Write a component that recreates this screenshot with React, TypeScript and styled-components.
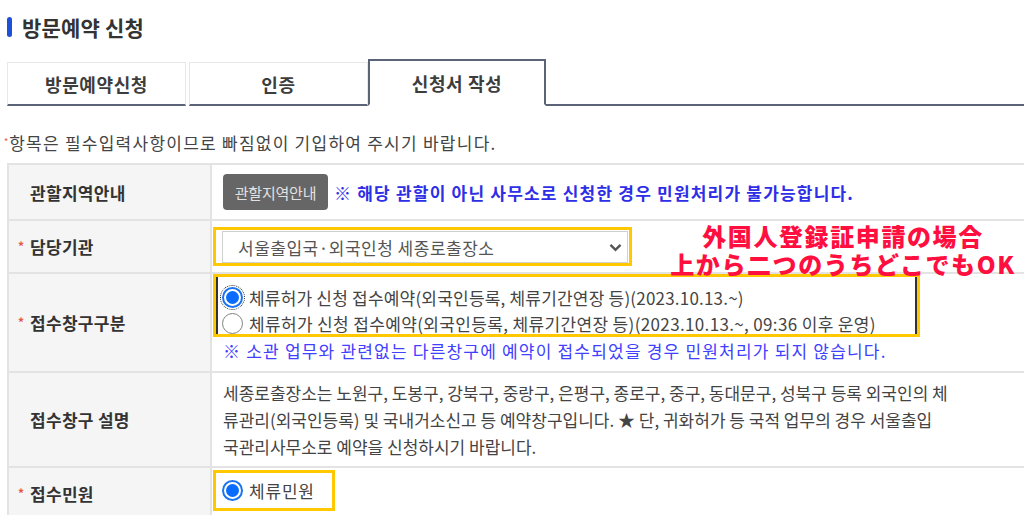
import React from "react";
import styled, { createGlobalStyle } from "styled-components";

const Global = createGlobalStyle`
  html, body { margin: 0; padding: 0; background: #fff; }
  body {
    width: 1024px; height: 515px; overflow: hidden;
    font-family: "Noto Sans CJK KR", "Noto Sans", sans-serif;
    color: #444;
  }
`;

const Page = styled.div`
  padding-left: 4px;
  width: 1100px;
`;

const TitleRow = styled.div`
  display: flex;
  align-items: center;
  gap: 10px;
  height: 28px;
  margin-top: 13px;
  padding-left: 3px;
`;

const TitleBar = styled.span`
  width: 5px;
  height: 20px;
  border-radius: 3px;
  background: #1d4fd8;
`;

const Title = styled.h1`
  margin: 0;
  font-size: 21px;
  font-weight: 700;
  color: #333;
  letter-spacing: 0.2px;
`;

const TabBar = styled.div`
  display: flex;
  align-items: flex-end;
  margin-top: 18px;
  margin-left: 3px;
`;

const Tab = styled.div<{ $active?: boolean; $w: number; $gap?: number }>`
  box-sizing: border-box;
  width: ${(p) => p.$w}px;
  margin-right: ${(p) => p.$gap ?? 0}px;
  display: flex;
  align-items: center;
  justify-content: center;
  font-size: 18px;
  font-weight: 700;
  letter-spacing: 0.6px;
  color: #3d3d3d;
  background: #fff;
  height: ${(p) => (p.$active ? 47 : 44)}px;
  border: ${(p) => (p.$active ? "2px solid #5a6378" : "1px solid #e8e8e8")};
  border-bottom: ${(p) => (p.$active ? "2px solid transparent" : "2px solid #5a6378")};
  padding-top: ${(p) => (p.$active ? 0 : 1)}px;
`;

const TabFill = styled.div`
  flex: 1;
  border-bottom: 2px solid #5a6378;
`;

const Note = styled.p`
  margin: 25px 0 0;
  font-size: 17px;
  line-height: 24px;
  letter-spacing: 1.25px;
  color: #444;
  display: flex;
  align-items: flex-start;
`;

const Star = styled.span<{ $size?: number }>`
  color: #e8543f;
  font-size: ${(p) => p.$size ?? 11}px;
  line-height: 1;
  margin-top: 6px;
  margin-right: 1px;
  letter-spacing: 0;
`;

const Table = styled.div`
  position: relative;
  margin-top: 8px;
  margin-left: 3px;
  display: grid;
  grid-template-columns: 203px 1fr;
  border-top: 2px solid #e3e3e3;
  border-left: 2px solid #e3e3e3;
`;

const LabelCell = styled.div<{ $h: number }>`
  box-sizing: border-box;
  min-height: ${(p) => p.$h}px;
  background: #f5f5f5;
  border-right: 2px solid #e3e3e3;
  border-bottom: 2px solid #e3e3e3;
  display: flex;
  align-items: center;
  padding-left: 9px;
  font-size: 17px;
  font-weight: 700;
  letter-spacing: 0.3px;
  color: #333;
`;

const LabelStar = styled.span`
  color: #e8543f;
  font-size: 12px;
  width: 12px;
  margin-top: -2px;
`;

const LabelText = styled.span<{ $plain?: boolean }>`
  padding-left: ${(p) => (p.$plain ? 12 : 0)}px;
`;

const ContentCell = styled.div<{ $h: number; $align?: string; $pt?: number }>`
  box-sizing: border-box;
  min-height: ${(p) => p.$h}px;
  border-bottom: 2px solid #e3e3e3;
  display: flex;
  flex-direction: column;
  justify-content: ${(p) => p.$align ?? "center"};
  padding-top: ${(p) => p.$pt ?? 0}px;
  padding-left: 1px;
`;

const InlineRow = styled.div`
  display: flex;
  align-items: center;
  padding-left: 10px;
  gap: 6px;
`;

const GuideButton = styled.button`
  width: 105px;
  height: 36px;
  border: none;
  border-radius: 4px;
  background: #666;
  color: #e2e2e2;
  font-family: inherit;
  font-size: 15px;
  padding: 0;
  letter-spacing: -0.2px;
`;

const BlueBold = styled.span`
  color: #2e2ee6;
  font-size: 17px;
  font-weight: 700;
  letter-spacing: 1.2px;
  white-space: nowrap;
`;

const Highlight = styled.div<{ $w: number; $pad?: string }>`
  box-sizing: border-box;
  width: ${(p) => p.$w}px;
  border: 3px solid #ffc800;
  padding: ${(p) => p.$pad ?? "0"};
`;

const SelectBox = styled.div`
  box-sizing: border-box;
  height: 32px;
  border: 1px solid #d0d0d0;
  display: flex;
  align-items: center;
  justify-content: space-between;
  padding: 0 5px 0 15px;
  font-size: 17px;
  letter-spacing: 0.5px;
  color: #555;
  background: #fff;
`;

const RadioGroup = styled.div`
  border-left: 2px solid #333;
  border-right: 2px solid #333;
  padding: 10px 0 0 4px;
  height: 57px;
  box-sizing: border-box;
  display: flex;
  flex-direction: column;
  gap: 5px;
`;

const RadioLine = styled.label<{ $ls?: number }>`
  display: flex;
  align-items: center;
  gap: 6px;
  font-size: 17px;
  line-height: 21px;
  letter-spacing: ${(p) => p.$ls ?? 0}px;
  color: #444;
  white-space: nowrap;
`;

const Radio = styled.span<{ $checked?: boolean; $focus?: boolean }>`
  box-sizing: border-box;
  width: 21px;
  height: 21px;
  flex: none;
  border-radius: 50%;
  background: #fff;
  border: ${(p) => (p.$checked ? "2px solid #1a73f0" : "1.5px solid #808080")};
  display: flex;
  align-items: center;
  justify-content: center;
  outline: ${(p) => (p.$focus ? "1px dotted #222" : "none")};
  outline-offset: 1px;
  &::after {
    content: "";
    display: ${(p) => (p.$checked ? "block" : "none")};
    width: 13px;
    height: 13px;
    border-radius: 50%;
    background: #0a6cff;
  }
`;

const BlueNote = styled.div`
  margin-top: 2px;
  padding-left: 10px;
  font-size: 17px;
  line-height: 24px;
  letter-spacing: 1.2px;
  color: #4040ff;
  white-space: nowrap;
`;

const Desc = styled.div`
  padding-left: 10px;
  font-size: 17px;
  line-height: 27px;
  color: #444;
`;

const DescLine = styled.span`
  display: block;
  white-space: nowrap;
`;

const Annotation = styled.div`
  position: absolute;
  left: 644px;
  top: 57px;
  width: 380px;
  text-align: center;
  font-family: "Noto Sans CJK JP", sans-serif;
  font-weight: 900;
  font-size: 24px;
  line-height: 28px;
  color: #ff0f40;
  letter-spacing: 1.6px;
`;

const Chevron = () => (
  <svg width="13" height="9" viewBox="0 0 13 9">
    <path d="M1.5 1.8 L6.5 6.8 L11.5 1.8" fill="none" stroke="#555" strokeWidth="2.4" />
  </svg>
);

export default function App() {
  return (
    <>
      <Global />
      <Page>
        <TitleRow>
          <TitleBar />
          <Title>방문예약 신청</Title>
        </TitleRow>
        <TabBar>
          <Tab $w={179} $gap={3}>방문예약신청</Tab>
          <Tab $w={179}>인증</Tab>
          <Tab $w={178} $active>신청서 작성</Tab>
          <TabFill />
        </TabBar>
        <Note>
          <Star $size={9}>*</Star>항목은 필수입력사항이므로 빠짐없이 기입하여 주시기 바랍니다.
        </Note>
        <Table>
          <LabelCell $h={56}>
            <LabelText $plain>관할지역안내</LabelText>
          </LabelCell>
          <ContentCell $h={56}>
            <InlineRow>
              <GuideButton>관할지역안내</GuideButton>
              <BlueBold>※ 해당 관할이 아닌 사무소로 신청한 경우 민원처리가 불가능합니다.</BlueBold>
            </InlineRow>
          </ContentCell>

          <LabelCell $h={53}>
            <LabelStar>*</LabelStar>
            <LabelText>담당기관</LabelText>
          </LabelCell>
          <ContentCell $h={53}>
            <Highlight $w={419} $pad="1px 1px 0 6px">
              <SelectBox>
                <span>서울출입국·외국인청 세종로출장소</span>
                <Chevron />
              </SelectBox>
            </Highlight>
          </ContentCell>

          <LabelCell $h={99}>
            <LabelStar>*</LabelStar>
            <LabelText>접수창구구분</LabelText>
          </LabelCell>
          <ContentCell $h={99} $align="flex-start">
            <Highlight $w={707}>
              <RadioGroup>
                <RadioLine $ls={0.2}>
                  <Radio $checked $focus />
                  체류허가 신청 접수예약(외국인등록, 체류기간연장 등)(2023.10.13.~)
                </RadioLine>
                <RadioLine $ls={0.35}>
                  <Radio />
                  체류허가 신청 접수예약(외국인등록, 체류기간연장 등)(2023.10.13.~, 09:36 이후 운영)
                </RadioLine>
              </RadioGroup>
            </Highlight>
            <BlueNote>※ 소관 업무와 관련없는 다른창구에 예약이 접수되었을 경우 민원처리가 되지 않습니다.</BlueNote>
          </ContentCell>

          <LabelCell $h={95}>
            <LabelText $plain>접수창구 설명</LabelText>
          </LabelCell>
          <ContentCell $h={95}>
            <Desc>
              <DescLine>세종로출장소는 노원구, 도봉구, 강북구, 중랑구, 은평구, 종로구, 중구, 동대문구, 성북구 등록 외국인의 체</DescLine>
              <DescLine>류관리(외국인등록) 및 국내거소신고 등 예약창구입니다. ★ 단, 귀화허가 등 국적 업무의 경우 서울출입</DescLine>
              <DescLine>국관리사무소로 예약을 신청하시기 바랍니다.</DescLine>
            </Desc>
          </ContentCell>

          <LabelCell $h={52}>
            <LabelStar>*</LabelStar>
            <LabelText>접수민원</LabelText>
          </LabelCell>
          <ContentCell $h={52} $align="flex-start" $pt={2}>
            <Highlight $w={122} $pad="7px 0 7px 6px">
              <RadioLine $ls={0.8}>
                <Radio $checked />
                체류민원
              </RadioLine>
            </Highlight>
          </ContentCell>

          <Annotation>
            外国人登録証申請の場合
            <br />
            上から二つのうちどこでもOK
          </Annotation>
        </Table>
      </Page>
    </>
  );
}
